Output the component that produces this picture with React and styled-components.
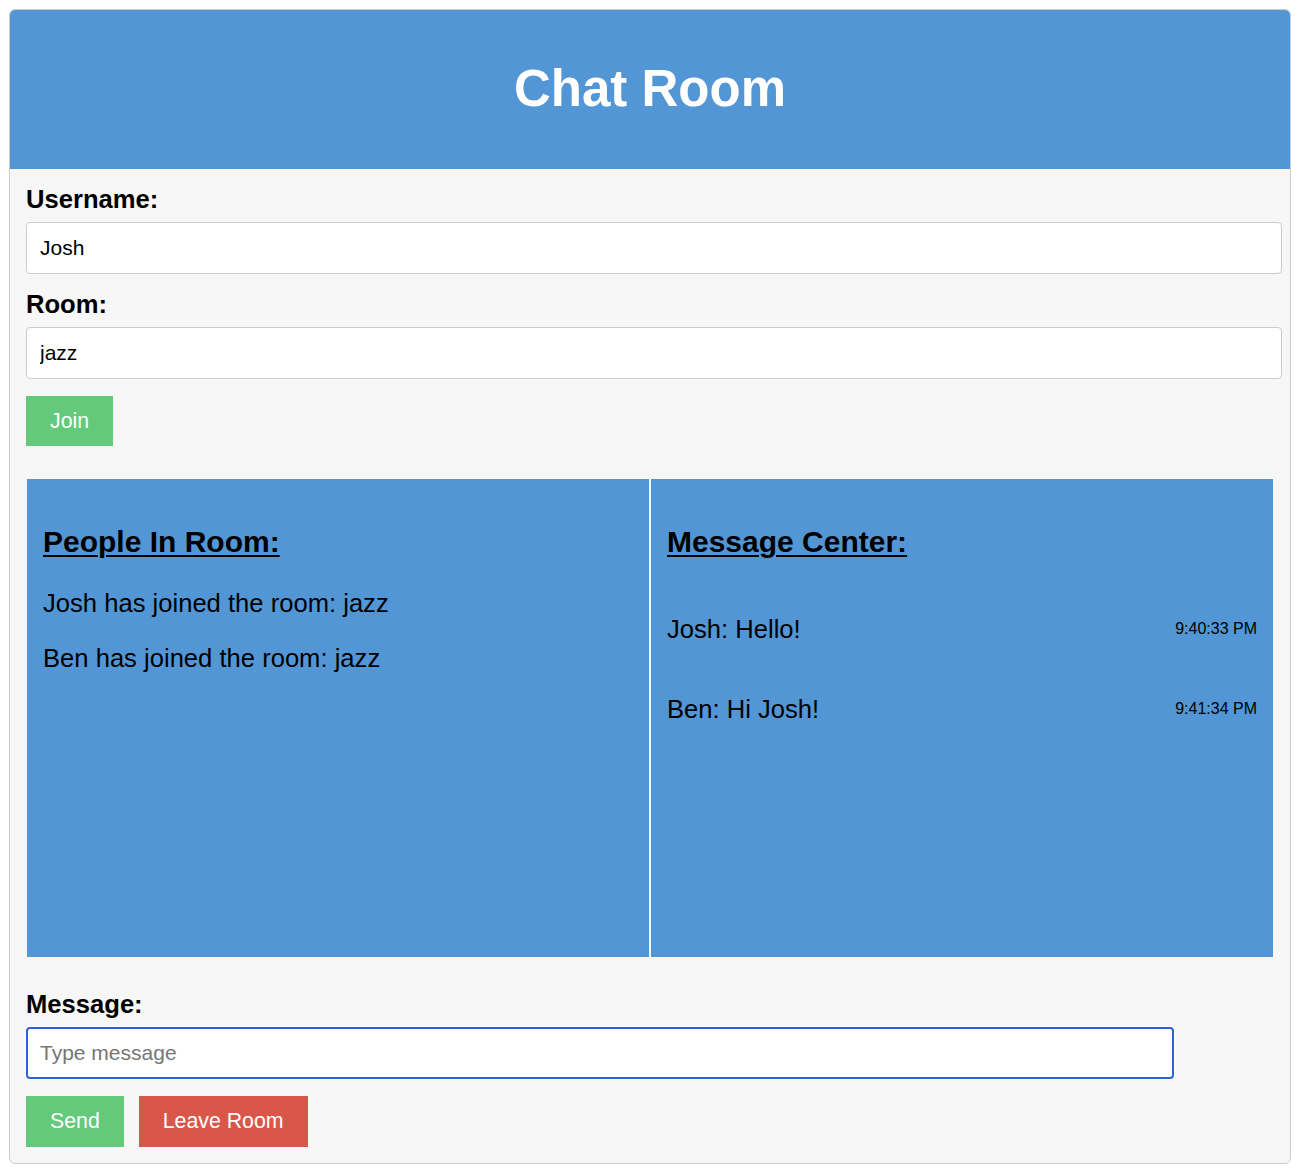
import React from "react";
import styled, { createGlobalStyle } from "styled-components";

const Global = createGlobalStyle`
  html, body { margin: 0; padding: 0; background: #ffffff; }
  body { font-family: "Liberation Sans", Arial, Helvetica, sans-serif; }
  * { box-sizing: border-box; }
`;

const Page = styled.div`
  padding: 9px;
`;

const Card = styled.div`
  width: 1282px;
  border: 1px solid #cccccc;
  border-radius: 6px;
  background: #f7f7f7;
  overflow: hidden;
`;

const Header = styled.header`
  height: 159px;
  background: #5296d5;
  display: flex;
  align-items: center;
  justify-content: center;
`;

const Title = styled.h1`
  margin: 0;
  padding-bottom: 3px;
  color: #ffffff;
  font-size: 51px;
  font-weight: 700;
  line-height: 1;
`;

const Body = styled.div`
  padding: 16px 8px 16px 16px;
  display: flex;
  flex-direction: column;
`;

const Label = styled.label`
  font-size: 25.6px;
  font-weight: 700;
  color: #000;
  line-height: 29px;
  margin-top: ${(p) => p.$mt || 0}px;
`;

const TextInput = styled.input`
  display: block;
  width: ${(p) => p.$w || 1256}px;
  height: 52px;
  margin-top: 8px;
  padding: 0 13px;
  font-family: inherit;
  font-size: 21px;
  color: #000;
  background: #ffffff;
  border: ${(p) => (p.$focused ? "2px solid #2d62cc" : "1px solid #cccccc")};
  border-radius: 4px;
  outline: none;
  ${(p) => p.$focused && "padding: 0 12px; box-shadow: 0 0 0 1px #ffffff;"}
  &::placeholder { color: #767676; }
`;

const ButtonRow = styled.div`
  display: flex;
  gap: 15px;
  margin-top: ${(p) => p.$mt || 17}px;
`;

const Button = styled.button`
  height: ${(p) => p.$h || 50}px;
  padding: 0 24px;
  border: none;
  border-radius: 0;
  font-family: inherit;
  font-size: 21.3px;
  color: #ffffff;
  background: ${(p) => (p.$variant === "danger" ? "#d8574a" : "#64c97a")};
  cursor: pointer;
`;

const Panels = styled.div`
  display: flex;
  gap: 2px;
  margin: 33px 0 0 1px;
  width: 1246px;
  height: 478px;
`;

const Panel = styled.section`
  flex: 1;
  background: #5296d5;
  padding: 30px 16px 16px 16px;
  display: flex;
  flex-direction: column;
`;

const PanelTitle = styled.h2`
  margin: 16px 0 0;
  font-size: 30px;
  font-weight: 700;
  line-height: 34px;
  text-decoration: underline;
  text-decoration-thickness: 2px;
  text-underline-offset: 3px;
  color: #000;
`;

const List = styled.div`
  display: flex;
  flex-direction: column;
  gap: ${(p) => p.$gap}px;
  margin-top: ${(p) => p.$mt}px;
`;

const Entry = styled.p`
  margin: 0;
  font-size: 25.6px;
  line-height: 29px;
  color: #000;
`;

const MsgRow = styled.div`
  display: flex;
  align-items: center;
  justify-content: space-between;
`;

const Time = styled.span`
  font-size: 16px;
  color: #000;
  margin-top: -2px;
`;

const people = ["Josh has joined the room: jazz", "Ben has joined the room: jazz"];
const messages = [
  { text: "Josh: Hello!", time: "9:40:33 PM" },
  { text: "Ben: Hi Josh!", time: "9:41:34 PM" },
];

export default function App() {
  return (
    <>
      <Global />
      <Page>
        <Card>
          <Header>
            <Title>Chat Room</Title>
          </Header>
          <Body>
            <Label>Username:</Label>
            <TextInput defaultValue="Josh" />
            <Label $mt={16}>Room:</Label>
            <TextInput defaultValue="jazz" />
            <ButtonRow>
              <Button>Join</Button>
            </ButtonRow>
            <Panels>
              <Panel>
                <PanelTitle>People In Room:</PanelTitle>
                <List $gap={26} $mt={30}>
                  {people.map((p) => (
                    <Entry key={p}>{p}</Entry>
                  ))}
                </List>
              </Panel>
              <Panel>
                <PanelTitle>Message Center:</PanelTitle>
                <List $gap={51} $mt={56}>
                  {messages.map((m) => (
                    <MsgRow key={m.time}>
                      <Entry>{m.text}</Entry>
                      <Time>{m.time}</Time>
                    </MsgRow>
                  ))}
                </List>
              </Panel>
            </Panels>
            <Label $mt={33}>Message:</Label>
            <TextInput $w={1148} $focused placeholder="Type message" />
            <ButtonRow>
              <Button $h={51}>Send</Button>
              <Button $h={51} $variant="danger">Leave Room</Button>
            </ButtonRow>
          </Body>
        </Card>
      </Page>
    </>
  );
}
